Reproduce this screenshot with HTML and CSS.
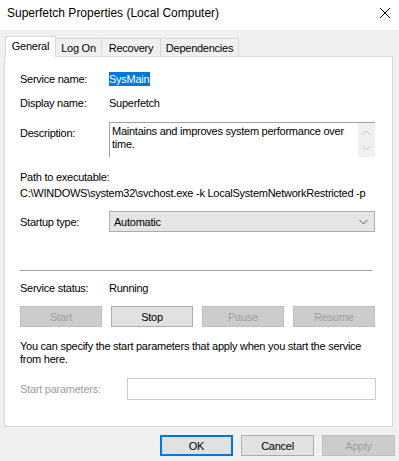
FILE: index.html
```html
<!DOCTYPE html>
<html>
  <head>
    <meta charset="UTF-8">
    <title>Superfetch Properties (Local Computer)</title>
    <link rel="stylesheet" href="styles.css">
  </head>
  <body>
    <div class="titlebar">
      <span class="title">Superfetch Properties (Local Computer)</span>
      <svg class="close" width="12" height="12" viewBox="0 0 12 12">
        <path d="M1 1 L11 11 M11 1 L1 11" stroke="#000" stroke-width="1" fill="none"/>
      </svg>
    </div>
    <div class="dialog">
      <div class="tabs">
        <div class="tab active" style="width: 51px">General</div>
        <div class="tab" style="width: 45px">Log On</div>
        <div class="tab" style="width: 59px">Recovery</div>
        <div class="tab last" style="width: 79px">Dependencies</div>
      </div>
      <div class="panel">
        <div class="row">
          <span class="label">Service name:</span>
          <span class="value"><span class="selected">SysMain</span></span>
        </div>
        <div class="row second">
          <span class="label">Display name:</span>
          <span class="value">Superfetch</span>
        </div>
        <div class="row desc-row">
          <span class="label desc-label">Description:</span>
          <div class="textbox">
            <div class="textbox-text">Maintains and improves system performance over time.</div>
            <div class="scrollbar">
              <svg width="9" height="6" viewBox="0 0 9 6"><path d="M0.5 5 L4.5 1 L8.5 5" stroke="#c2c2c2" fill="none"/></svg>
              <svg width="9" height="6" viewBox="0 0 9 6"><path d="M0.5 1 L4.5 5 L8.5 1" stroke="#c2c2c2" fill="none"/></svg>
            </div>
          </div>
        </div>
        <div class="path-label">Path to executable:</div>
        <div class="path">C:\WINDOWS\system32\svchost.exe -k LocalSystemNetworkRestricted -p</div>
        <div class="row startup-row">
          <span class="label">Startup type:</span>
          <div class="select">
            <span>Automatic</span>
            <svg width="9" height="6" viewBox="0 0 9 6"><path d="M0.5 1 L4.5 5 L8.5 1" stroke="#606060" fill="none"/></svg>
          </div>
        </div>
        <div class="separator"></div>
        <div class="row status-row">
          <span class="label">Service status:</span>
          <span class="value">Running</span>
        </div>
        <div class="service-buttons">
          <button class="btn" disabled>Start</button>
          <button class="btn">Stop</button>
          <button class="btn" disabled>Pause</button>
          <button class="btn" disabled>Resume</button>
        </div>
        <p class="hint">You can specify the start parameters that apply when you start the service from here.</p>
        <div class="row params-row">
          <span class="label params-label disabled-text">Start parameters:</span>
          <div class="params-input"></div>
        </div>
      </div>
      <div class="footer">
        <button class="btn footer-btn default">OK</button>
        <button class="btn footer-btn">Cancel</button>
        <button class="btn footer-btn" disabled>Apply</button>
      </div>
    </div>
  </body>
</html>
```

FILE: styles.css
```css
body {
  margin: 0;
  background-color: #f0f0f0;
  font-family: "Liberation Sans", Arial, sans-serif;
  font-size: 11px;
  letter-spacing: -0.25px;
  color: #000;
  width: 399px;
  height: 461px;
  overflow: hidden;
}

.titlebar {
  height: 30px;
  background-color: #fff;
  display: flex;
  align-items: center;
  justify-content: space-between;
  padding: 0 8px 4px 7px;
  box-sizing: border-box;
}

.title {
  font-size: 12px;
  letter-spacing: 0;
}

.dialog {
  padding: 6px 6px 0 4px;
}

.tabs {
  display: flex;
  align-items: flex-end;
  height: 20px;
  padding-left: 1px;
}

.tab {
  box-sizing: border-box;
  height: 18px;
  padding-top: 2px;
  line-height: 14px;
  text-align: center;
  background-color: #f0f0f0;
  border-top: 1px solid #d9d9d9;
  border-left: 1px solid #d9d9d9;
}

.tab.last {
  border-right: 1px solid #d9d9d9;
}

.tab.active {
  height: 21px;
  margin-bottom: -1px;
  background-color: #fff;
  border-right: 1px solid #d9d9d9;
  position: relative;
  z-index: 1;
}

.tab.active + .tab {
  border-left: none;
}

.panel {
  box-sizing: border-box;
  width: 389px;
  height: 371px;
  background-color: #fff;
  border: 1px solid #d9d9d9;
  padding: 14px 17px 0 15px;
}

.row {
  display: flex;
  align-items: center;
  line-height: 16px;
}

.label {
  width: 89px;
  flex-shrink: 0;
}

.second {
  margin-top: 8px;
}

.selected {
  background-color: #0078d7;
  color: #fff;
  padding: 1px 1px 1px 0;
}

.desc-row {
  align-items: flex-start;
  margin-top: 11px;
}

.desc-label {
  margin-top: 3px;
}

.textbox {
  flex: 1;
  height: 35px;
  box-sizing: border-box;
  display: flex;
  border-top: 1px solid #a0a0a0;
  border-left: 1px solid #a0a0a0;
}

.textbox-text {
  flex: 1;
  line-height: 13px;
  padding: 2px 0 0 2px;
}

.scrollbar {
  width: 17px;
  background-color: #f0f0f0;
  display: flex;
  flex-direction: column;
  align-items: center;
  justify-content: space-between;
  padding: 7px 0 6px;
  box-sizing: border-box;
}

.path-label {
  margin-top: 12px;
  line-height: 16px;
}

.path {
  line-height: 16px;
  white-space: nowrap;
}

.startup-row {
  margin-top: 10px;
}

.select {
  flex: 1;
  height: 21px;
  box-sizing: border-box;
  background-color: #e5e5e5;
  border: 1px solid #adadad;
  display: flex;
  align-items: center;
  justify-content: space-between;
  padding: 0 6px 0 4px;
}

.separator {
  margin: 38px 3px 0 0;
  height: 1px;
  background-color: #a0a0a0;
}

.status-row {
  margin-top: 9px;
}

.service-buttons {
  margin-top: 10px;
  display: grid;
  grid-template-columns: repeat(4, 1fr);
  column-gap: 9px;
}

.btn {
  height: 21px;
  box-sizing: border-box;
  font-family: "Liberation Sans", Arial, sans-serif;
  font-size: 11px;
  letter-spacing: -0.25px;
  color: #000;
  background-color: #e1e1e1;
  border: 1px solid #adadad;
  border-radius: 0;
  padding: 0;
  margin: 0;
}

.btn:disabled {
  background-color: #cccccc;
  border-color: #bfbfbf;
  color: #a0a0a0;
}

.hint {
  margin: 13px 0 0;
  line-height: 13px;
}

.params-row {
  margin-top: 12px;
}

.disabled-text {
  color: #a0a0a0;
}

.params-label {
  width: 107px;
}

.params-input {
  flex: 1;
  height: 22px;
  box-sizing: border-box;
  border: 1px solid #cccccc;
  margin-right: -1px;
}

.footer {
  display: flex;
  justify-content: flex-end;
  gap: 8px;
  margin: 8px -2px 0 0;
}

.footer-btn {
  width: 73px;
}

.footer-btn.default {
  border: 2px solid #0078d7;
}
```
